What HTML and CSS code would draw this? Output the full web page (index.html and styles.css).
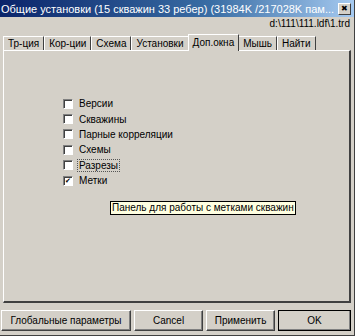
FILE: index.html
```html
<!DOCTYPE html>
<html>
<head>
<meta charset="UTF-8">
<title>Общие установки</title>
<link rel="stylesheet" href="styles.css">
</head>
<body>
<div class="window">
  <div class="titlebar">
    <span class="title">Общие установки (15 скважин 33 ребер) (31984K /217028K пам...</span>
    <span class="close">&#x2716;</span>
  </div>
  <div class="path">d:\111\111.ldf\1.trd</div>

  <div class="tabs">
    <div class="tab">Тр-ция</div>
    <div class="tab">Кор-ции</div>
    <div class="tab">Схема</div>
    <div class="tab">Установки</div>
    <div class="tab active">Доп.окна</div>
    <div class="tab">Мышь</div>
    <div class="tab">Найти</div>
  </div>

  <div class="panel">
    <ul class="checks">
      <li><span class="box"></span><span class="lbl">Версии</span></li>
      <li><span class="box"></span><span class="lbl">Скважины</span></li>
      <li><span class="box"></span><span class="lbl">Парные корреляции</span></li>
      <li><span class="box"></span><span class="lbl">Схемы</span></li>
      <li><span class="box"></span><span class="lbl focus">Разрезы</span></li>
      <li><span class="box checked">&#x2714;</span><span class="lbl">Метки</span></li>
    </ul>
    <div class="tooltip">Панель для работы с метками скважин</div>
  </div>

  <div class="buttons">
    <div class="btn wide">Глобальные параметры</div>
    <div class="btn">Cancel</div>
    <div class="btn">Применить</div>
    <div class="btn default">OK</div>
  </div>
</div>
</body>
</html>
```

FILE: styles.css
```css
body {
  margin: 0;
  background: #d4d0c8;
  font-family: "Liberation Sans", Arial, sans-serif;
  font-size: 10px;
  color: #000;
}

.window {
  width: 355px;
  height: 336px;
  background: #d4d0c8;
  border-right: 1px solid #404040;
  border-bottom: 1px solid #404040;
  box-sizing: border-box;
}

/* title bar */
.titlebar {
  height: 17px;
  display: flex;
  align-items: center;
  background: linear-gradient(to right, #0a246a, #3a6ea5 60%, #a6caf0);
  color: #fff;
  font-size: 11px;
  padding-left: 1px;
}
.title {
  flex: 1;
  white-space: nowrap;
  overflow: hidden;
}
.close {
  width: 11px;
  height: 10px;
  margin-right: 3px;
  background: #d4d0c8;
  color: #000;
  font-size: 8px;
  line-height: 10px;
  text-align: center;
  border-top: 1px solid #fff;
  border-left: 1px solid #fff;
  border-right: 1px solid #404040;
  border-bottom: 1px solid #404040;
}

.path {
  height: 13px;
  font-size: 10px;
  text-align: right;
  padding-right: 4px;
  line-height: 13px;
}

/* tabs */
.tabs {
  display: flex;
  align-items: flex-end;
  height: 20px;
  padding-left: 3px;
}
.tab {
  height: 13px;
  line-height: 13px;
  padding: 0 4px 0 4px;
  border-left: 1px solid #fff;
  border-top: 1px solid #fff;
  border-right: 1px solid #404040;
  white-space: nowrap;
}
.tab.active {
  height: 16px;
  line-height: 15px;
  padding: 0 4px;
  margin: 0 -1px -1px -1px;
  background: #d4d0c8;
  position: relative;
  z-index: 1;
}

/* page */
.panel {
  margin-left: 3px;
  width: 348px;
  height: 253px;
  border-top: 1px solid #fff;
  border-left: 1px solid #fff;
  border-right: 2px solid #404040;
  border-bottom: 2px solid #404040;
  box-sizing: border-box;
  padding-top: 45px;
  padding-left: 59px;
}

.checks {
  list-style: none;
  margin: 0;
  padding: 0;
}
.checks li {
  display: flex;
  align-items: center;
  height: 15.4px;
}
.box {
  width: 8px;
  height: 8px;
  background: #fff;
  border-top: 1px solid #808080;
  border-left: 1px solid #808080;
  border-right: 1px solid #fff;
  border-bottom: 1px solid #fff;
  box-shadow: inset 1px 1px 0 #404040;
  font-size: 7px;
  line-height: 8px;
  text-align: center;
}
.lbl {
  margin-left: 4px;
  padding: 0 1px;
  border: 1px solid transparent;
}
.lbl.focus {
  border: 1px dotted #555;
}

.tooltip {
  display: inline-block;
  margin-top: 13px;
  margin-left: 47px;
  padding: 0 1px;
  height: 12px;
  line-height: 12px;
  background: #ffffe1;
  border: 1px solid #000;
  white-space: nowrap;
}

/* buttons */
.buttons {
  display: flex;
  gap: 3px;
  padding: 7px 3px 0 1px;
}
.btn {
  height: 19px;
  line-height: 19px;
  width: 68px;
  text-align: center;
  border-top: 1px solid #fff;
  border-left: 1px solid #fff;
  border-right: 1px solid #404040;
  border-bottom: 1px solid #404040;
  box-shadow: inset -1px -1px 0 #808080;
}
.btn.wide {
  width: 130px;
}
.btn.default {
  width: 72px;
  border: 1px solid #000;
}
```
